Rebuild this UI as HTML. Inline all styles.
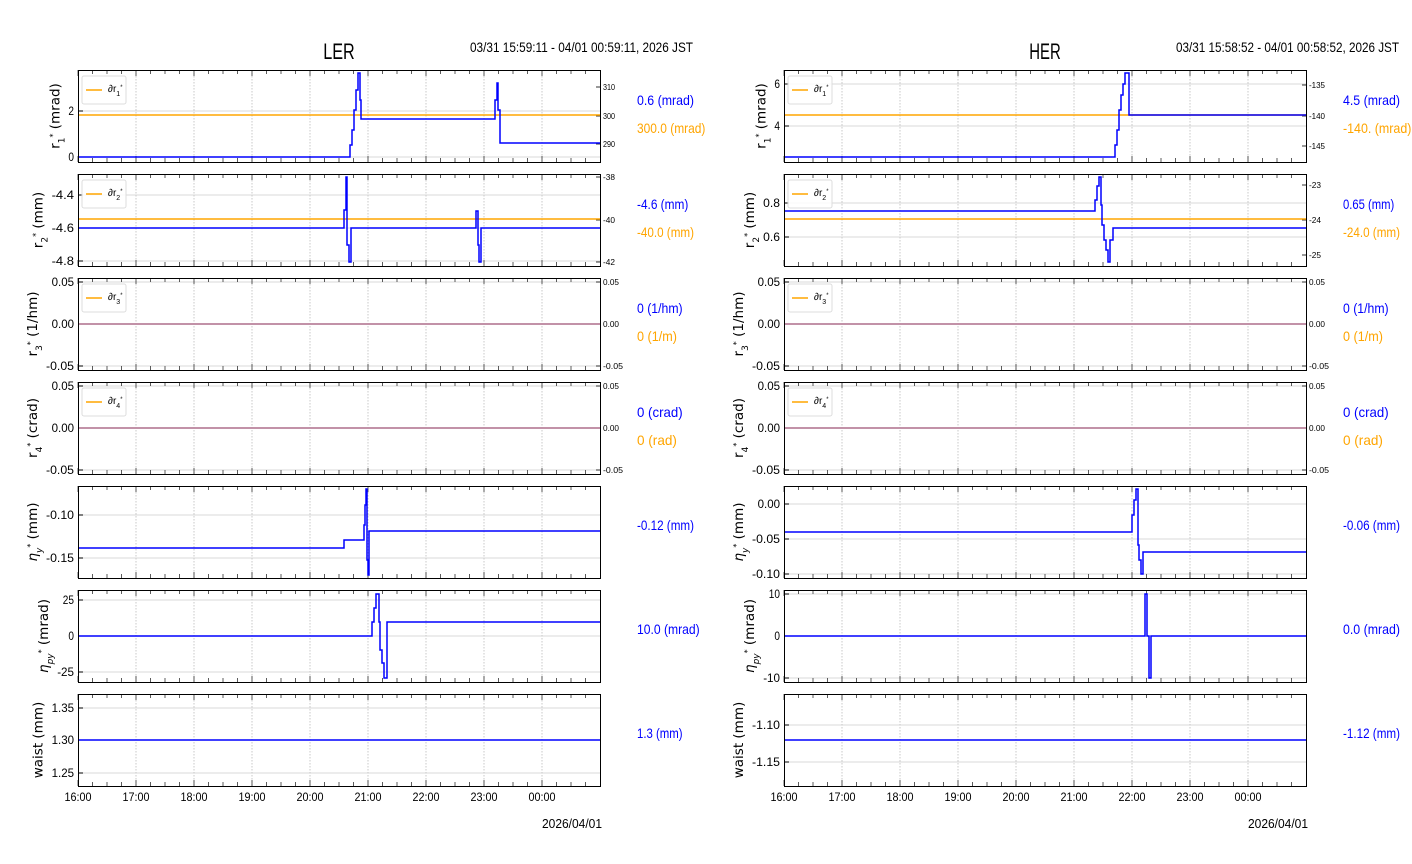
<!DOCTYPE html>
<html><head><meta charset="utf-8"><style>
html,body{margin:0;padding:0;background:#fff;width:1412px;height:864px;overflow:hidden}
svg{display:block}
text{font-family:"Liberation Sans",sans-serif}
</style></head><body>
<svg id="s" width="1412" height="864" xmlns="http://www.w3.org/2000/svg"></svg>
<script>
var s=document.getElementById('s'),h='';
var tops=[70,174,278,382,486,590,694],PH=92,PW=522;
function T(x,y,t,o){o=o||{};h+='<text x="'+x+'" y="'+y+'" font-size="'+(o.fs||11)+'" fill="'+(o.c||'#000')+'"'+(o.a?' text-anchor="'+o.a+'"':'')+(o.tl?' textLength="'+o.tl+'" lengthAdjust="spacingAndGlyphs"':'')+(o.tr?' transform="'+o.tr+'"':'')+(o.ff?' style="font-family:'+o.ff+'"':'')+'>'+t+'</text>';}
function L(x1,y1,x2,y2,c,w,d){h+='<line x1="'+x1+'" y1="'+y1+'" x2="'+x2+'" y2="'+y2+'" stroke="'+c+'" stroke-width="'+(w||1)+'"'+(d?' stroke-dasharray="'+d+'"':'')+'/>';}
function P(pts,c,w){var d='M'+pts[0][0]+' '+pts[0][1];for(var i=1;i<pts.length;i++){d+=' H'+pts[i][0]+' V'+pts[i][1];}h+='<path d="'+d+'" fill="none" stroke="'+c+'" stroke-width="'+(w||1.5)+'"/>';}
var ylab=['r<tspan baseline-shift="sub" font-size="9">1</tspan><tspan baseline-shift="super" font-size="8">*</tspan> (mrad)','r<tspan baseline-shift="sub" font-size="9">2</tspan><tspan baseline-shift="super" font-size="8">*</tspan> (mm)','r<tspan baseline-shift="sub" font-size="9">3</tspan><tspan baseline-shift="super" font-size="8">*</tspan> (1/hm)','r<tspan baseline-shift="sub" font-size="9">4</tspan><tspan baseline-shift="super" font-size="8">*</tspan> (crad)','<tspan font-style="italic">η</tspan><tspan baseline-shift="sub" font-size="9" font-style="italic">y</tspan><tspan baseline-shift="super" font-size="8">*</tspan> (mm)','<tspan font-style="italic">η</tspan><tspan baseline-shift="sub" font-size="9" font-style="italic">py</tspan><tspan baseline-shift="super" font-size="8">*</tspan> (mrad)','waist (mm)'];
function plot(X0,cfg){
 T(X0+261,59,cfg.name,{fs:22,a:'middle',tl:cfg.name.length*10.5});
 T(X0+615,52,cfg.date,{fs:14,a:'end',tl:223});
 for(var p=0;p<7;p++){
  var y0=tops[p],c=cfg.p[p];
  for(var k=1;k<9;k++){var gx=X0+58*k;L(gx,y0,gx,y0+PH,'#bbb',0.8,'1.5,1.5');}
  var mw=0;
  c.l.forEach(function(t){var w=t[0].length*5.6;if(w>mw)mw=w;L(X0,t[1],X0+PW,t[1],'#ccc',0.8);L(X0,t[1],X0+5,t[1],'#000',1);T(X0-4,t[1]+4,t[0],{fs:12,a:'end',tl:w});});
  for(var k=0;k<36;k++){var tx=X0+14.5*k;var len=(k%4==0)?6:4;L(tx,y0+PH,tx,y0+PH-len,'#333',0.8);L(tx,y0,tx,y0+len,'#333',0.8);}
  if(c.r){c.r.forEach(function(t){L(X0+PW,t[1],X0+PW-4,t[1],'#000',0.8);T(X0+PW+3,t[1]+3,t[0],{fs:8,tl:t[0].length*4});});}
  if(c.o){L(X0,c.o,X0+PW,c.o,'#ffa500',1.5);}
  P(c.b,'#0000ff',1.5);
  if(c.o&&c.pink){L(X0,c.o,X0+PW,c.o,'#d9a0a0',1.5);}
  h+='<rect x="'+(X0+0.5)+'" y="'+(y0+0.5)+'" width="'+PW+'" height="'+PH+'" fill="none" stroke="#000" stroke-width="1"/>';
  if(p<4){h+='<rect x="'+(X0+4)+'" y="'+(y0+6)+'" width="44" height="28" rx="2" fill="#fff" fill-opacity="0.85" stroke="#ddd"/>';L(X0+8,y0+20,X0+24,y0+20,'#ffa500',1.5);T(X0+30,y0+22,'∂r<tspan baseline-shift="sub" font-size="7">'+(p+1)+'</tspan><tspan baseline-shift="super" font-size="6">*</tspan>',{fs:10});}
  var lx=X0-4-mw-9;
  T(lx,y0+PH/2,ylab[p],{fs:13.5,a:'middle',tr:'rotate(-90 '+lx+' '+(y0+PH/2)+')',ff:'DejaVu Sans,sans-serif'});
  if(c.t1)T(X0+559,c.t1[1],c.t1[0],{fs:14,c:'#0000ff',tl:c.t1[0].length*5.7});
  if(c.t2)T(X0+559,c.t2[1],c.t2[0],{fs:14,c:'#ffa500',tl:c.t2[0].length*5.7});
 }
 var hrs=['16:00','17:00','18:00','19:00','20:00','21:00','22:00','23:00','00:00'];
 hrs.forEach(function(t,i){T(X0+58*i,801,t,{fs:12,a:'middle',tl:27});});
 T(X0+524,828,'2026/04/01',{fs:13,a:'end',tl:60});
}
var s3={l:[['0.05',282],['0.00',324],['-0.05',366]],r:[['0.05',282],['0.00',324],['-0.05',366]]};
function sh(c,X0){var b=c.b.map(function(q){return [q[0]+X0,q[1]];});var o={};for(var k in c)o[k]=c[k];o.b=b;return o;}
var ler={name:'LER',date:'03/31 15:59:11 - 04/01 00:59:11, 2026 JST',p:[
 {l:[['2',111],['0',157]],r:[['310',87],['300',116],['290',144]],o:115,b:[[0,157],[272,145],[274,130],[276,110],[278,90],[280,73],[282,100],[283,119],[417,100],[419,83],[420,110],[422,143],[522,143]],t1:['0.6 (mrad)',105],t2:['300.0 (mrad)',133]},
 {l:[['-4.4',195],['-4.6',228],['-4.8',261]],r:[['-38',177],['-40',220],['-42',262]],o:219,b:[[0,228],[266,210],[268,177],[269,245],[271,262],[273,228],[398,211],[400,245],[401,262],[403,228],[522,228]],t1:['-4.6 (mm)',209],t2:['-40.0 (mm)',237]},
 {l:s3.l,r:s3.r,o:324,pink:1,b:[[0,324],[522,324]],t1:['0 (1/hm)',313],t2:['0 (1/m)',341]},
 {l:[['0.05',386],['0.00',428],['-0.05',470]],r:[['0.05',386],['0.00',428],['-0.05',470]],o:428,pink:1,b:[[0,428],[522,428]],t1:['0 (crad)',417],t2:['0 (rad)',445]},
 {l:[['-0.10',515],['-0.15',558]],b:[[0,548],[266,540],[286,525],[287,505],[288,489],[289,560],[290,575],[291,531],[522,531]],t1:['-0.12 (mm)',530]},
 {l:[['25',600],['0',636],['-25',672]],b:[[0,636],[294,622],[296,608],[298,594],[301,622],[302,650],[304,663],[306,678],[309,622],[522,622]],t1:['10.0 (mrad)',634]},
 {l:[['1.35',708],['1.30',740],['1.25',773]],b:[[0,740],[522,740]],t1:['1.3 (mm)',738]}
]};
var her={name:'HER',date:'03/31 15:58:52 - 04/01 00:58:52, 2026 JST',p:[
 {l:[['6',84],['4',126]],r:[['-135',85],['-140',116],['-145',146]],o:115,pink:0,b:[[0,157],[331,145],[333,130],[335,110],[337,95],[339,84],[341,73],[345,115],[522,115]],t1:['4.5 (mrad)',105],t2:['-140. (mrad)',133]},
 {l:[['0.8',203],['0.6',237]],r:[['-23',185],['-24',220],['-25',255]],o:219,b:[[0,211],[311,200],[313,186],[315,177],[317,205],[318,225],[320,240],[322,250],[324,262],[326,240],[329,228],[522,228]],t1:['0.65 (mm)',209],t2:['-24.0 (mm)',237]},
 {l:s3.l,r:s3.r,o:324,pink:1,b:[[0,324],[522,324]],t1:['0 (1/hm)',313],t2:['0 (1/m)',341]},
 {l:[['0.05',386],['0.00',428],['-0.05',470]],r:[['0.05',386],['0.00',428],['-0.05',470]],o:428,pink:1,b:[[0,428],[522,428]],t1:['0 (crad)',417],t2:['0 (rad)',445]},
 {l:[['0.00',504],['-0.05',539],['-0.10',574]],b:[[0,532],[348,515],[350,500],[352,489],[354,545],[355,560],[357,574],[359,552],[522,552]],t1:['-0.06 (mm)',530]},
 {l:[['10',594],['0',636],['-10',678]],b:[[0,636],[361,594],[363,636],[365,678],[367,636],[522,636]],t1:['0.0 (mrad)',634]},
 {l:[['-1.10',725],['-1.15',762]],b:[[0,740],[522,740]],t1:['-1.12 (mm)',738]}
]};
ler.p=ler.p.map(function(c){return sh(c,78);});
her.p=her.p.map(function(c){return sh(c,784);});
plot(78,ler);plot(784,her);
s.innerHTML=h;
</script>
</body></html>
